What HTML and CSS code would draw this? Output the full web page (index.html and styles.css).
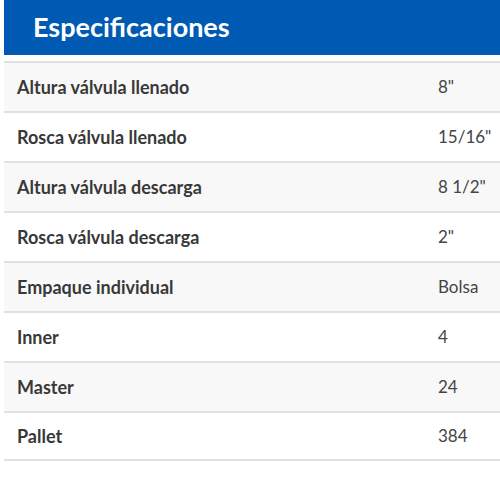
FILE: index.html
```html
<!DOCTYPE html>
<html lang="es">
<head>
<meta charset="utf-8">
<link rel="stylesheet" href="styles.css">
</head>
<body>
<div class="specs">
  <h2 class="specs-title">Especificaciones</h2>
  <div class="specs-table">
    <div class="row odd"><span class="label">Altura válvula llenado</span><span class="value">8"</span></div>
    <div class="row"><span class="label">Rosca válvula llenado</span><span class="value">15/16"</span></div>
    <div class="row odd"><span class="label">Altura válvula descarga</span><span class="value">8 1/2"</span></div>
    <div class="row"><span class="label">Rosca válvula descarga</span><span class="value">2"</span></div>
    <div class="row odd"><span class="label">Empaque individual</span><span class="value">Bolsa</span></div>
    <div class="row"><span class="label">Inner</span><span class="value">4</span></div>
    <div class="row odd"><span class="label">Master</span><span class="value">24</span></div>
    <div class="row last"><span class="label">Pallet</span><span class="value">384</span></div>
  </div>
</div>
</body>
</html>
```
FILE: styles.css
```css
html, body {
  margin: 0;
  padding: 0;
  background: #ffffff;
}
body {
  font-family: Lato, "Open Sans", sans-serif;
}
.specs {
  padding-left: 4px;
}
.specs-title {
  margin: 0;
  height: 55px;
  display: flex;
  align-items: center;
  padding-left: 29px;
  padding-bottom: 3px;
  box-sizing: border-box;
  background: #0059b3;
  color: #ffffff;
  font-size: 27px;
  font-weight: 700;
}
.specs-table {
  margin-top: 6px;
}
.row {
  display: grid;
  grid-template-columns: 434px 1fr;
  height: 50px;
  box-sizing: border-box;
  border-top: 2px solid #e1e1e1;
  align-items: center;
  background: #ffffff;
}
.row.odd {
  background: #f8f8f8;
}
.row.last {
  border-bottom: 2px solid #e1e1e1;
}
.label {
  padding-left: 13px;
  padding-bottom: 1px;
  font-size: 18px;
  font-weight: 700;
  color: #383838;
}
.value {
  padding-bottom: 1px;
  font-size: 17px;
  color: #444444;
}
```
